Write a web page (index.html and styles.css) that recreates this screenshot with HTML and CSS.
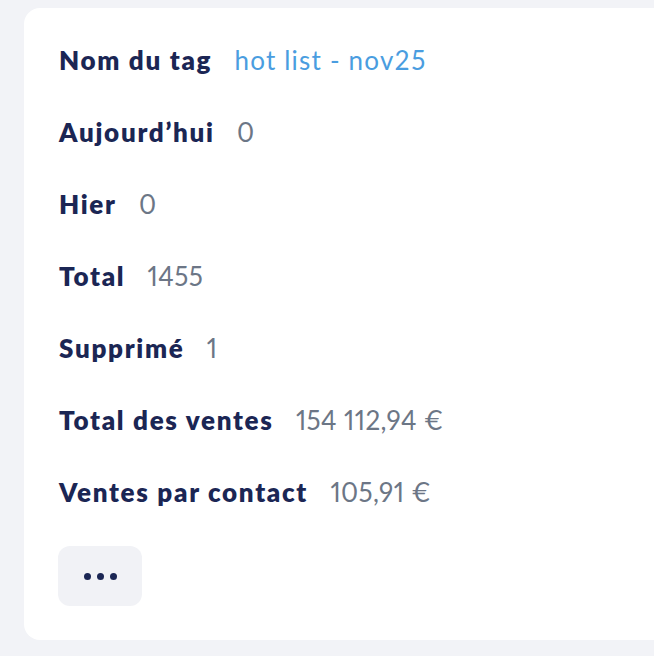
FILE: index.html
```html
<!DOCTYPE html>
<html lang="fr">
<head>
<meta charset="utf-8">
<title>Tag</title>
<link rel="stylesheet" href="styles.css">
</head>
<body>
<section class="card">
  <div class="rows">
    <div class="row"><span class="label">Nom du tag</span><a class="value link" href="#">hot list - nov25</a></div>
    <div class="row"><span class="label">Aujourd’hui</span><span class="value num">0</span></div>
    <div class="row"><span class="label">Hier</span><span class="value num">0</span></div>
    <div class="row"><span class="label">Total</span><span class="value num">1455</span></div>
    <div class="row"><span class="label">Supprimé</span><span class="value num">1</span></div>
    <div class="row"><span class="label">Total des ventes</span><span class="value num">154 112,94 €</span></div>
    <div class="row"><span class="label">Ventes par contact</span><span class="value num">105,91 €</span></div>
  </div>
  <button class="more" type="button" aria-label="Plus"><span class="dot"></span><span class="dot"></span><span class="dot"></span></button>
</section>
</body>
</html>
```
FILE: styles.css
```css
html, body {
  margin: 0;
  padding: 0;
  background: #f2f3f7;
}
body {
  padding: 8px 0 16px 24px;
  font-family: Lato, "Noto Sans", sans-serif;
}
.card {
  background: #ffffff;
  border-radius: 16px 0 0 16px;
  height: 632px;
  box-sizing: border-box;
  padding: 36px 0 0 35px;
  display: flex;
  flex-direction: column;
}
.rows {
  display: flex;
  flex-direction: column;
  gap: 40px;
}
.row {
  display: flex;
  gap: 24px;
  font-size: 26px;
  line-height: 32px;
  white-space: nowrap;
}
.label {
  font-weight: 800;
  color: #1b2654;
  letter-spacing: 1.7px;
  margin-right: -1.7px;
}
.value {
  color: #6c7686;
  font-weight: 400;
  letter-spacing: 1.2px;
}
.num {
  font-variant-numeric: proportional-nums;
  letter-spacing: 0.4px;
}
.link {
  color: #4a9de0;
  text-decoration: none;
}
.more {
  margin: 38px 0 0 -1px;
  width: 84px;
  height: 60px;
  border: none;
  border-radius: 12px;
  background: #f1f2f6;
  display: flex;
  align-items: center;
  justify-content: center;
  gap: 6px;
  padding: 0;
}
.dot {
  width: 7px;
  height: 7px;
  border-radius: 50%;
  background: #1b2654;
}
```
